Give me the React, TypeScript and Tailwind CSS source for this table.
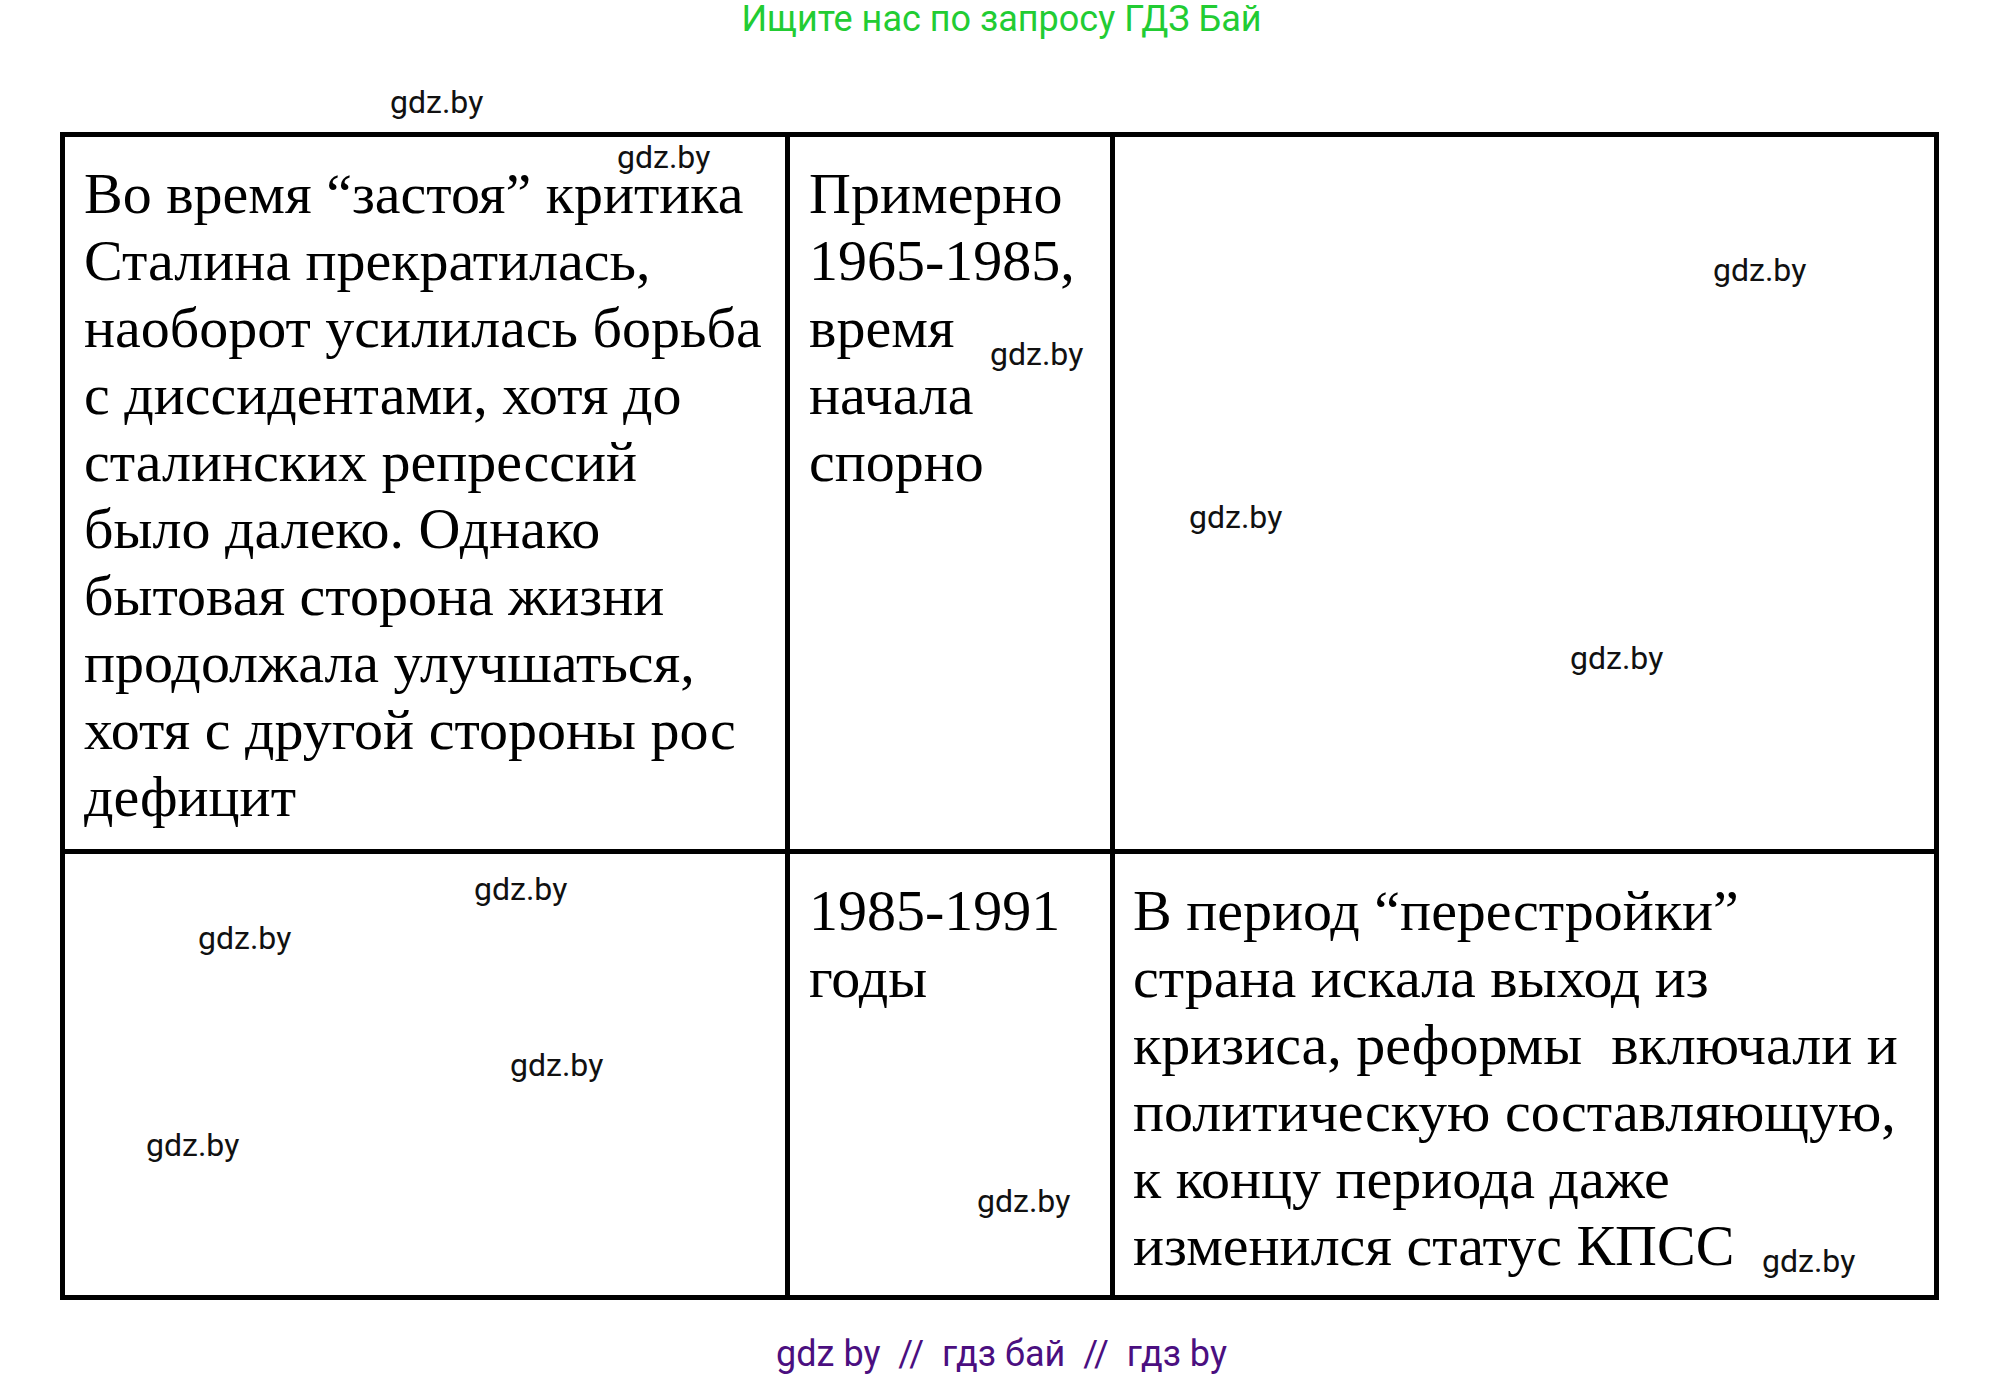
const marks = [
  { id: 1, cls: 'left-[390px] top-[86px]' },
  { id: 2, cls: 'left-[617px] top-[141px]' },
  { id: 3, cls: 'left-[1713px] top-[254px]' },
  { id: 4, cls: 'left-[990px] top-[338px]' },
  { id: 5, cls: 'left-[1189px] top-[501px]' },
  { id: 6, cls: 'left-[1570px] top-[642px]' },
  { id: 7, cls: 'left-[474px] top-[873px]' },
  { id: 8, cls: 'left-[198px] top-[922px]' },
  { id: 9, cls: 'left-[510px] top-[1049px]' },
  { id: 10, cls: 'left-[146px] top-[1129px]' },
  { id: 11, cls: 'left-[977px] top-[1185px]' },
  { id: 12, cls: 'left-[1762px] top-[1245px]' },
]

const serif = "font-['Liberation_Serif','Times_New_Roman',serif] text-[58px] leading-[67px] text-black whitespace-nowrap"

function Lines({ lines }: { lines: string[] }) {
  return (
    <div className={serif}>
      {lines.map((l, i) => (
        <div key={i} className="whitespace-pre">
          {l}
        </div>
      ))}
    </div>
  )
}

export default function App() {
  return (
    <div className="relative w-[2003px] h-[1377px] bg-white overflow-hidden font-['Roboto','Liberation_Sans',sans-serif]">
      <div className="h-[132px] pt-[1px] text-center text-[36px] leading-[36px] text-[#22cc33]">
        Ищите нас по запросу ГДЗ Бай
      </div>

      <div className="ml-[60px] w-[1879px] border-[5px] border-black grid grid-cols-[725px_325px_819px] grid-rows-[717px_441px]">
        <div className="border-r-[5px] border-b-[5px] border-black pl-[19px] pt-[23px]">
          <Lines
            lines={[
              'Во время “застоя” критика',
              'Сталина прекратилась,',
              'наоборот усилилась борьба',
              'с диссидентами, хотя до',
              'сталинских репрессий',
              'было далеко. Однако',
              'бытовая сторона жизни',
              'продолжала улучшаться,',
              'хотя с другой стороны рос',
              'дефицит',
            ]}
          />
        </div>
        <div className="border-r-[5px] border-b-[5px] border-black pl-[19px] pt-[23px]">
          <Lines lines={['Примерно', '1965-1985,', 'время', 'начала', 'спорно']} />
        </div>
        <div className="border-b-[5px] border-black" />

        <div className="border-r-[5px] border-black" />
        <div className="border-r-[5px] border-black pl-[19px] pt-[23px]">
          <Lines lines={['1985-1991', 'годы']} />
        </div>
        <div className="pl-[18px] pt-[23px]">
          <Lines
            lines={[
              'В период “перестройки”',
              'страна искала выход из',
              'кризиса, реформы  включали и',
              'политическую составляющую,',
              'к концу периода даже',
              'изменился статус КПСС',
            ]}
          />
        </div>
      </div>

      <div className="mt-[36px] text-center text-[36px] leading-none text-[#4b0f80] whitespace-pre">
        gdz by  //  гдз бай  //  гдз by
      </div>

      {marks.map((m) => (
        <div
          key={m.id}
          className={`absolute ${m.cls} text-[32px] leading-[32px] text-[#111] whitespace-nowrap`}
        >
          gdz.by
        </div>
      ))}
    </div>
  )
}
